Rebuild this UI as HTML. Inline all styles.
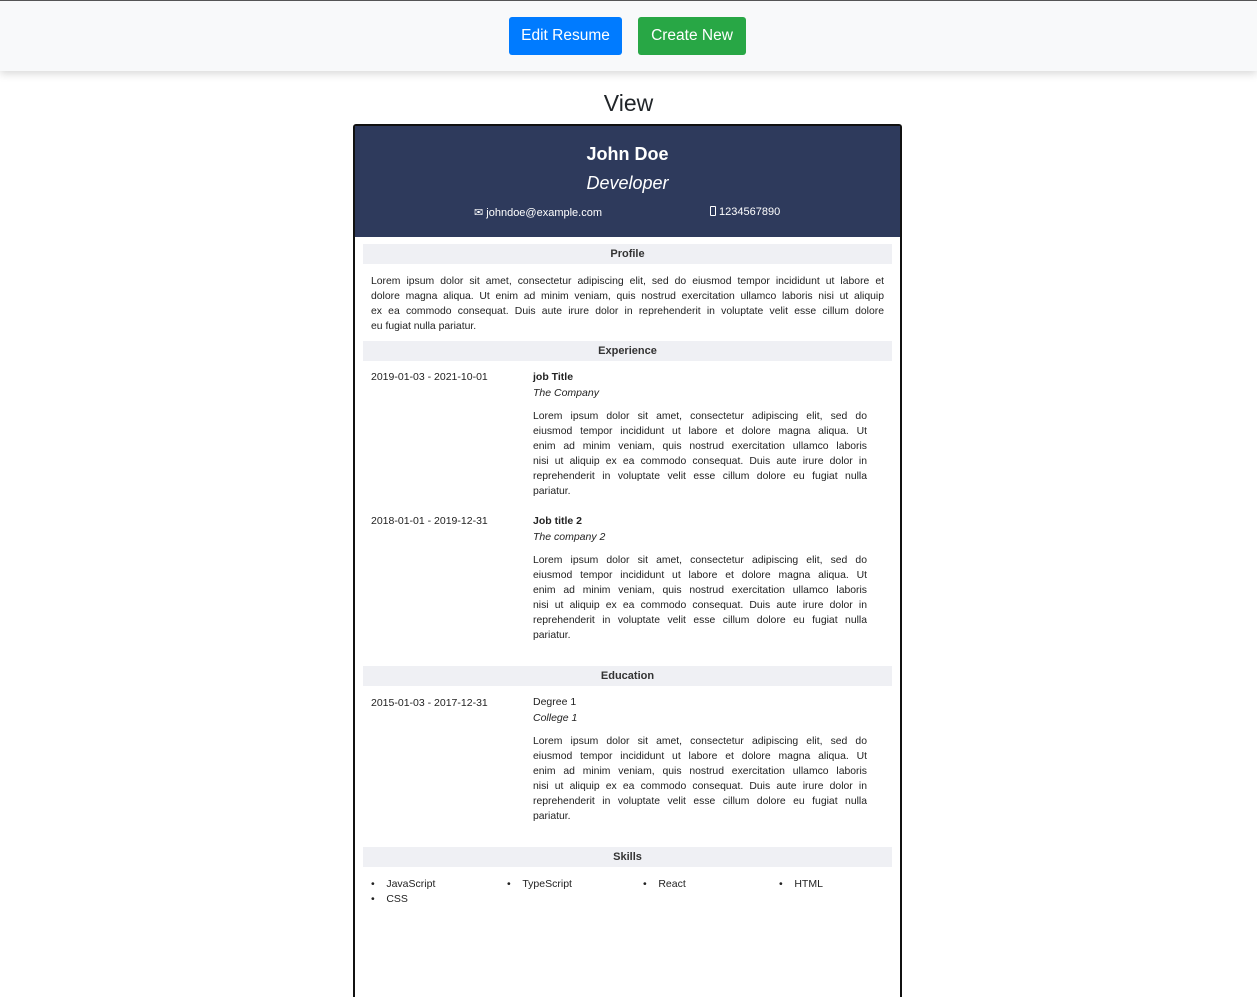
<!DOCTYPE html>
<html><head><meta charset="utf-8">
<style>
*{margin:0;padding:0;box-sizing:border-box}
html,body{width:1257px;height:997px;overflow:hidden}
body{background:#fff;font-family:"Liberation Sans",sans-serif;color:#212529;position:relative}
.nav{position:absolute;left:0;top:0;width:1257px;height:71px;background:#f8f9fa;border-top:1px solid #555;box-shadow:0 3px 8px rgba(0,0,0,.15)}
.btn{position:absolute;top:16px;height:38px;color:#fff;font-size:15.5px;line-height:38px;text-align:center;border-radius:3px}
.a{position:absolute;white-space:nowrap}
.card{position:absolute;left:353px;top:124px;width:549px;height:873px;border:2px solid #111;border-bottom:none;border-radius:3px 3px 0 0;background:#fff}
.hdr{position:absolute;left:0;top:0;width:545px;height:111px;background:#2e3a5c;color:#fff}
.sec{position:absolute;left:8px;width:529px;height:20px;background:#eff0f4;font-size:11px;font-weight:bold;text-align:center;line-height:20px;color:#333}
.p{position:absolute;font-size:10.4px;line-height:15px;color:#222}
.p div{text-align:justify;text-align-last:justify;white-space:nowrap}
.p div.l{text-align-last:left}
.t{font-size:10.5px;color:#222}
</style></head><body>
<div class="nav">
<div class="btn" style="left:509px;width:113px;background:#007bff">Edit Resume</div>
<div class="btn" style="left:638px;width:108px;background:#28a745">Create New</div>
</div>
<div class="a" style="left:0;width:1257px;text-align:center;top:88px;font-size:23px;line-height:30px">View</div>
<div class="card">
<div class="hdr">
<div class="a" style="left:0;width:545px;text-align:center;top:18px;font-size:18px;font-weight:bold">John Doe</div>
<div class="a" style="left:0;width:545px;text-align:center;top:47px;font-size:18px;font-style:italic">Developer</div>
<div class="a" style="left:119px;top:80px;font-size:11px">&#9993; johndoe@example.com</div>
<div class="a" style="left:355px;top:80px;font-size:11px"><span style="display:inline-block;width:6px;height:10px;border:1px solid #fff;border-radius:1px;vertical-align:-1px"></span> 1234567890</div>
</div>
<div class="sec" style="top:118px">Profile</div>
<div class="p" style="left:16px;top:148px;width:513px">
<div>Lorem ipsum dolor sit amet, consectetur adipiscing elit, sed do eiusmod tempor incididunt ut labore et</div>
<div>dolore magna aliqua. Ut enim ad minim veniam, quis nostrud exercitation ullamco laboris nisi ut aliquip</div>
<div>ex ea commodo consequat. Duis aute irure dolor in reprehenderit in voluptate velit esse cillum dolore</div>
<div class="l">eu fugiat nulla pariatur.</div>
</div>
<div class="sec" style="top:215px">Experience</div>

<div class="a t" style="left:16px;top:245px">2019-01-03 - 2021-10-01</div>
<div class="a t" style="left:178px;top:245px;font-weight:bold">job Title</div>
<div class="a t" style="left:178px;top:261px;font-style:italic">The Company</div>
<div class="p" style="left:178px;top:283px;width:334px">
<div>Lorem ipsum dolor sit amet, consectetur adipiscing elit, sed do</div>
<div>eiusmod tempor incididunt ut labore et dolore magna aliqua. Ut</div>
<div>enim ad minim veniam, quis nostrud exercitation ullamco laboris</div>
<div>nisi ut aliquip ex ea commodo consequat. Duis aute irure dolor in</div>
<div>reprehenderit in voluptate velit esse cillum dolore eu fugiat nulla</div>
<div class="l">pariatur.</div>
</div>

<div class="a t" style="left:16px;top:389px">2018-01-01 - 2019-12-31</div>
<div class="a t" style="left:178px;top:389px;font-weight:bold">Job title 2</div>
<div class="a t" style="left:178px;top:405px;font-style:italic">The company 2</div>
<div class="p" style="left:178px;top:427px;width:334px">
<div>Lorem ipsum dolor sit amet, consectetur adipiscing elit, sed do</div>
<div>eiusmod tempor incididunt ut labore et dolore magna aliqua. Ut</div>
<div>enim ad minim veniam, quis nostrud exercitation ullamco laboris</div>
<div>nisi ut aliquip ex ea commodo consequat. Duis aute irure dolor in</div>
<div>reprehenderit in voluptate velit esse cillum dolore eu fugiat nulla</div>
<div class="l">pariatur.</div>
</div>

<div class="sec" style="top:540px">Education</div>
<div class="a t" style="left:16px;top:571px">2015-01-03 - 2017-12-31</div>
<div class="a t" style="left:178px;top:570px">Degree 1</div>
<div class="a t" style="left:178px;top:586px;font-style:italic">College 1</div>
<div class="p" style="left:178px;top:608px;width:334px">
<div>Lorem ipsum dolor sit amet, consectetur adipiscing elit, sed do</div>
<div>eiusmod tempor incididunt ut labore et dolore magna aliqua. Ut</div>
<div>enim ad minim veniam, quis nostrud exercitation ullamco laboris</div>
<div>nisi ut aliquip ex ea commodo consequat. Duis aute irure dolor in</div>
<div>reprehenderit in voluptate velit esse cillum dolore eu fugiat nulla</div>
<div class="l">pariatur.</div>
</div>

<div class="sec" style="top:721px">Skills</div>
<div class="a t" style="left:16px;top:752px">&bull;&nbsp;&nbsp;&nbsp;&nbsp;JavaScript</div>
<div class="a t" style="left:152px;top:752px">&bull;&nbsp;&nbsp;&nbsp;&nbsp;TypeScript</div>
<div class="a t" style="left:288px;top:752px">&bull;&nbsp;&nbsp;&nbsp;&nbsp;React</div>
<div class="a t" style="left:424px;top:752px">&bull;&nbsp;&nbsp;&nbsp;&nbsp;HTML</div>
<div class="a t" style="left:16px;top:767px">&bull;&nbsp;&nbsp;&nbsp;&nbsp;CSS</div>
</div>
</body></html>
